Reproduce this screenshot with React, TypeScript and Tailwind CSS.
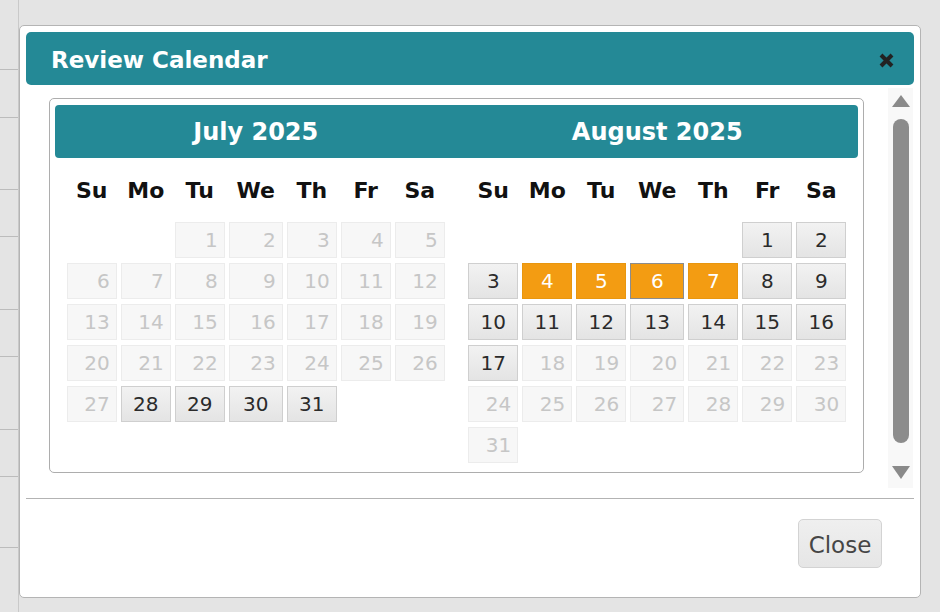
import React from "react";

type Cell = { d: number; s: "off" | "on" | "sel" | "selb" } | null;

function buildMonth(startDow: number, days: number, state: (d: number) => "off" | "on" | "sel" | "selb"): Cell[] {
  const cells: Cell[] = [];
  for (let i = 0; i < startDow; i++) cells.push(null);
  for (let d = 1; d <= days; d++) cells.push({ d, s: state(d) });
  return cells;
}

const july = buildMonth(2, 31, (d) => (d >= 28 ? "on" : "off"));
const august = buildMonth(5, 31, (d) => {
  if (d === 6) return "selb";
  if (d >= 4 && d <= 7) return "sel";
  if (d <= 17) return "on";
  return "off";
});

const dayNames = ["Su", "Mo", "Tu", "We", "Th", "Fr", "Sa"];

function DayCell({ c }: { c: Cell }) {
  if (!c) return <div className="h-[36px]" />;
  if (c.s === "off")
    return (
      <div className="h-[36px] flex items-center justify-end pr-[6px] border border-[#ececec] bg-[#f7f7f7] text-[#c6c6c6]">
        {c.d}
      </div>
    );
  if (c.s === "on")
    return (
      <div className="h-[36px] flex items-center justify-center border border-[#cfcfcf] bg-gradient-to-b from-[#f2f2f2] to-[#e4e4e4] text-[#2b2b2b]">
        {c.d}
      </div>
    );
  return (
    <div
      className={
        "h-[36px] flex items-center justify-center bg-[#f39c12] text-white border " +
        (c.s === "selb" ? "border-[#8c8c8c]" : "border-[#e8960f]")
      }
    >
      {c.d}
    </div>
  );
}

function Month({ cells }: { cells: Cell[] }) {
  return (
    <div className="flex flex-col items-center">
      <div className="grid grid-cols-[50px_50px_50px_54px_50px_50px_50px] gap-x-[4px] mt-[14px] h-[36px] items-center">
        {dayNames.map((n) => (
          <div key={n} className="text-center font-bold text-[22px] text-[#111]">
            {n}
          </div>
        ))}
      </div>
      <div className="grid grid-cols-[50px_50px_50px_54px_50px_50px_50px] gap-x-[4px] gap-y-[5px] mt-[14px] text-[20px]">
        {cells.map((c, i) => (
          <DayCell key={i} c={c} />
        ))}
      </div>
    </div>
  );
}

export default function App() {
  const lines = [70, 118, 190, 237, 310, 357, 430, 477, 548];
  return (
    <div className="relative w-[940px] h-[612px] overflow-hidden bg-[#e4e4e4] font-['DejaVu_Sans',Verdana,sans-serif]">
      {/* background table rows */}
      <div className="flex flex-col w-[19px] border-r border-[#c9c9c9] h-[612px]">
        {lines.map((y, i) => (
          <div
            key={y}
            className="border-b border-[#bcbcbc] shrink-0"
            style={{ height: y - (i === 0 ? 0 : lines[i - 1]) }}
          />
        ))}
      </div>

      {/* dialog */}
      <div className="absolute left-[19px] top-[25px] w-[902px] h-[573px] bg-white border border-[#b4b4b4] rounded-[5px] p-[6px] flex flex-col">
        <div className="h-[53px] shrink-0 rounded-[5px] bg-[#248996] flex items-center justify-between pl-[25px] pr-[19px]">
          <span className="text-white font-bold text-[23px] pt-[3px]">Review Calendar</span>
          <svg width="17" height="17" viewBox="0 0 17 17" className="mt-[3px]">
            <path d="M3 3 L14 14 M14 3 L3 14" stroke="#222" strokeWidth="4" strokeLinecap="butt" />
          </svg>
        </div>

        <div className="mt-[3px] h-[410px] shrink-0 flex">
          <div className="w-[862px] pl-[23px] pt-[10px]">
            <div className="w-[815px] h-[375px] border border-[#adadad] rounded-[5px] pt-[6px] px-[5px]">
              <div className="h-[53px] rounded-[4px] bg-[#248996] grid grid-cols-2 items-center text-white font-bold text-[24px]">
                <div className="text-center">July 2025</div>
                <div className="text-center">August 2025</div>
              </div>
              <div className="grid grid-cols-2">
                <Month cells={july} />
                <Month cells={august} />
              </div>
            </div>
          </div>
          <div className="w-[25px] h-[400px] bg-[#f8f8f8] flex flex-col items-center pt-[7px] pl-[1px]">
            <svg width="18" height="12" viewBox="0 0 18 12">
              <path d="M9 0 L18 12 L0 12 Z" fill="#8a8a8a" />
            </svg>
            <div className="mt-[12px] w-[16px] h-[324px] rounded-full bg-[#8c8c8c]" />
            <svg width="18" height="13" viewBox="0 0 18 13" className="mt-[23px]">
              <path d="M0 0 L18 0 L9 13 Z" fill="#8a8a8a" />
            </svg>
          </div>
        </div>

        <div className="h-px bg-[#b3b3b3] shrink-0" />

        <div className="flex justify-end pr-[32px] pt-[20px]">
          <button className="w-[84px] h-[49px] rounded-[5px] border border-[#d3d3d3] bg-gradient-to-b from-[#efefef] to-[#e6e6e6] text-[#454545] text-[23px] flex items-center justify-center pt-[3px]">
            Close
          </button>
        </div>
      </div>
    </div>
  );
}
